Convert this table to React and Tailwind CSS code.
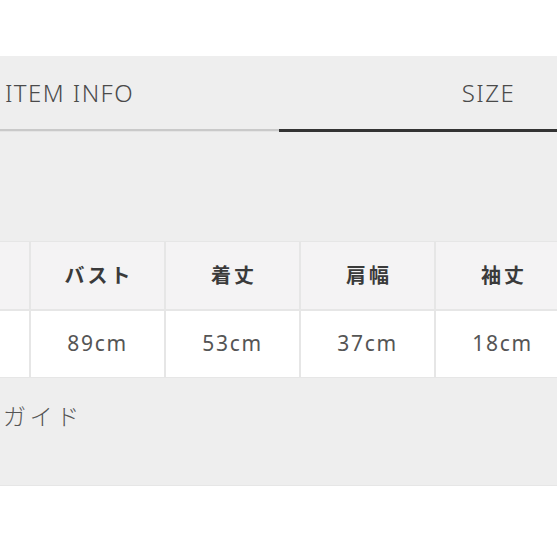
export default function App() {
  const heads = ["", "バスト", "着丈", "肩幅", "袖丈"];
  const vals = ["", "89cm", "53cm", "37cm", "18cm"];
  const font = { fontFamily: '"Noto Sans", "Noto Sans CJK JP", sans-serif' };
  return (
    <div className="w-[557px] h-[557px] overflow-hidden bg-white" style={font}>
      <div className="h-[56px] bg-white" />
      <div className="h-[430px] bg-[#eeeeee] relative overflow-hidden border-b border-[#e6e6e6]">
        <div className="ml-[-140px] w-[838px]">
          <div className="flex">
            <div className="w-[419px] h-[76px] flex flex-col justify-between">
              <div className="flex-1 flex items-center justify-center pt-[1px] text-[24px] tracking-[0.06em] text-[#4a4a4a] font-light">ITEM INFO</div>
              <div className="h-[3px] bg-[#c9c9c9] border-b border-[#e4e4e4]" />
            </div>
            <div className="w-[419px] h-[76px] flex flex-col justify-between">
              <div className="flex-1 flex items-center justify-center pt-[1px] text-[24px] tracking-[0.06em] text-[#4a4a4a] font-light">SIZE</div>
              <div className="h-[3px] bg-[#333333]" />
            </div>
          </div>
          <div className="h-[109px]" />
          <div className="flex gap-[2px] bg-[#e6e6e6] w-fit ml-[36px] border-y border-[#e6e6e6]">
            {heads.map((h, i) => (
              <div key={i} className="w-[133px] flex flex-col gap-[2px]">
                <div className="h-[67px] bg-[#f4f3f4] flex items-center justify-center text-[20px] font-bold tracking-[0.15em] text-[#3a3a3a] pl-[3px]">
                  {h}
                </div>
                <div className="h-[66px] bg-white flex items-center justify-center text-[21px] tracking-[0.08em] text-[#555555]">
                  {vals[i]}
                </div>
              </div>
            ))}
          </div>
          <div className="mt-[21px] ml-[143px] text-[23px] tracking-[0.16em] text-[#555555] font-light">ガイド</div>
        </div>
      </div>
    </div>
  );
}
